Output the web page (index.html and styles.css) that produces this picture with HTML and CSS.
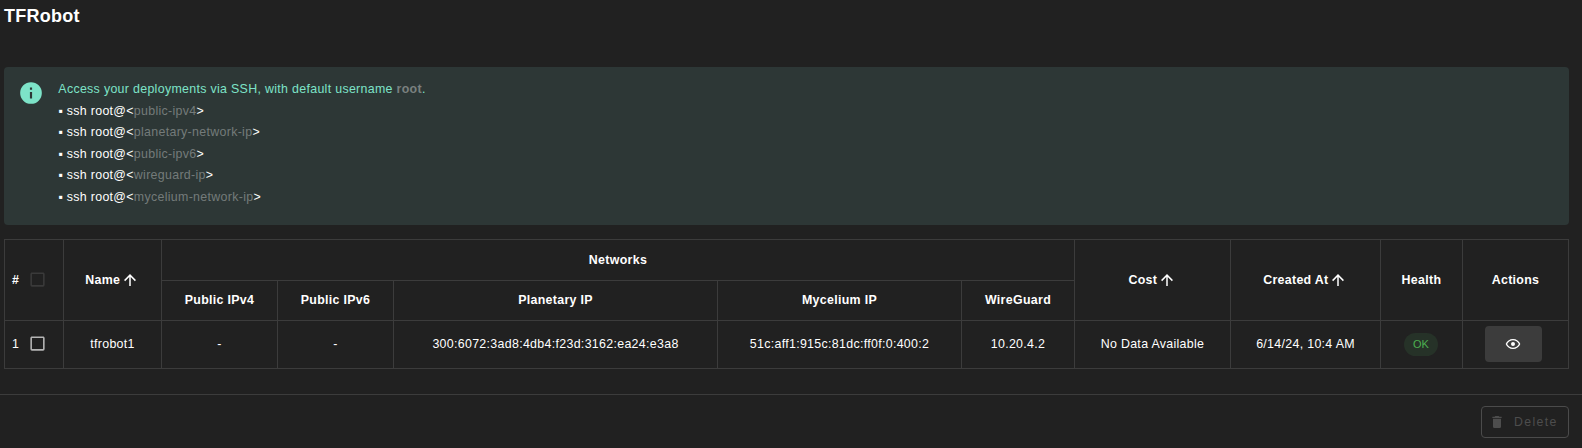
FILE: index.html
```html
<!DOCTYPE html>
<html lang="en">
<head>
<meta charset="utf-8">
<title>TFRobot</title>
<link rel="stylesheet" href="styles.css">
</head>
<body>
<svg class="defs" width="0" height="0">
  <symbol id="arrow-up" viewBox="0 0 24 24"><path d="M13,20H11V8L5.5,13.5L4.08,12.08L12,4.16L19.92,12.08L18.5,13.5L13,8V20Z"/></symbol>
  <symbol id="box" viewBox="0 0 24 24"><path d="M19,3H5C3.89,3 3,3.89 3,5V19A2,2 0 0,0 5,21H19A2,2 0 0,0 21,19V5C21,3.89 20.1,3 19,3M19,5V19H5V5H19Z"/></symbol>
</svg>
<h1 class="title">TFRobot</h1>
<section class="alert">
  <svg class="alert-icon" viewBox="0 0 24 24"><path d="M13,9H11V7H13M13,17H11V11H13M12,2A10,10 0 0,0 2,12A10,10 0 0,0 12,22A10,10 0 0,0 22,12A10,10 0 0,0 12,2Z"/></svg>
  <div class="alert-text">
    <p class="lead">Access your deployments via SSH, with default username <span class="user">root</span>.</p>
    <ul class="hosts">
      <li>ssh root@&lt;<span>public-ipv4</span>&gt;</li>
      <li>ssh root@&lt;<span>planetary-network-ip</span>&gt;</li>
      <li>ssh root@&lt;<span>public-ipv6</span>&gt;</li>
      <li>ssh root@&lt;<span>wireguard-ip</span>&gt;</li>
      <li>ssh root@&lt;<span>mycelium-network-ip</span>&gt;</li>
    </ul>
  </div>
</section>
<table class="table">
  <colgroup><col class="c-select"><col class="c-name"><col class="c-ipv4"><col class="c-ipv6"><col class="c-planetary"><col class="c-mycelium"><col class="c-wireguard"><col class="c-cost"><col class="c-created"><col class="c-health"><col class="c-actions"></colgroup>
  <thead>
    <tr class="row-group">
      <th class="tall" rowspan="2"><div class="select"># <svg class="box disabled"><use href="#box"/></svg></div></th>
      <th class="tall" rowspan="2"><div class="sort">Name<svg class="arrow"><use href="#arrow-up"/></svg></div></th>
      <th colspan="5">Networks</th>
      <th class="tall" rowspan="2"><div class="sort">Cost<svg class="arrow"><use href="#arrow-up"/></svg></div></th>
      <th class="tall" rowspan="2"><div class="sort">Created At<svg class="arrow"><use href="#arrow-up"/></svg></div></th>
      <th class="tall" rowspan="2">Health</th>
      <th class="tall" rowspan="2">Actions</th>
    </tr>
    <tr class="row-sub"><th>Public IPv4</th><th>Public IPv6</th><th>Planetary IP</th><th>Mycelium IP</th><th>WireGuard</th></tr>
  </thead>
  <tbody>
    <tr class="row-item">
      <td><div class="select">1 <svg class="box"><use href="#box"/></svg></div></td>
      <td>tfrobot1</td><td>-</td><td>-</td>
      <td>300:6072:3ad8:4db4:f23d:3162:ea24:e3a8</td>
      <td>51c:aff1:915c:81dc:ff0f:0:400:2</td>
      <td>10.20.4.2</td><td>No Data Available</td><td>6/14/24, 10:4 AM</td>
      <td class="flush"><div class="center"><span class="chip">OK</span></div></td>
      <td class="flush"><div class="center"><button class="view" aria-label="Details"><svg viewBox="0 0 24 24"><path d="M12,9A3,3 0 0,1 15,12A3,3 0 0,1 12,15A3,3 0 0,1 9,12A3,3 0 0,1 12,9M12,4.5C17,4.5 21.27,7.61 23,12C21.27,16.39 17,19.5 12,19.5C7,19.5 2.73,16.39 1,12C2.73,7.61 7,4.5 12,4.5M3.18,12C4.83,15.36 8.24,17.5 12,17.5C15.76,17.5 19.17,15.36 20.82,12C19.17,8.64 15.76,6.5 12,6.5C8.24,6.5 4.83,8.64 3.18,12Z"/></svg></button></div></td>
    </tr>
  </tbody>
</table>
<footer class="footer">
  <button class="delete" disabled><svg viewBox="0 0 24 24"><path d="M19,4H15.5L14.5,3H9.5L8.5,4H5V6H19M6,19A2,2 0 0,0 8,21H16A2,2 0 0,0 18,19V7H6V19Z"/></svg>Delete</button>
</footer>
</body>
</html>
```
FILE: styles.css
```css
* { box-sizing: border-box; margin: 0; padding: 0; }
html { background: #212121; overflow: hidden; }
body {
  height: 448px;
  background: #212121;
  color: #fff;
  font: 12.4px/21.6px "Liberation Sans", Arial, sans-serif;
  letter-spacing: 0.315px;
  overflow: hidden;
}
svg { display: block; fill: currentColor; flex: none; }
.defs { position: absolute; }
.title { height: 67px; padding-left: 4px; font-size: 18px; line-height: 32px; letter-spacing: 0.25px; }
.alert {
  display: flex;
  width: 1565px;
  height: 158px;
  margin-left: 4px;
  padding: 11px 14px;
  border-radius: 4px;
  background: #2d3736;
}
.alert-icon { width: 26px; height: 26px; margin: 2px 14.3px 0 0; color: #7de3c8; }
.alert-text { padding-top: 1px; }
.lead { color: #7de3c8; }
.user { color: #7a807f; font-weight: bold; }
.hosts { list-style: none; }
.hosts li::before { content: "▪ "; }
.hosts span { color: #747b7a; }
.table {
  width: 1565px;
  margin: 14px 0 0 4px;
  border-collapse: collapse;
  table-layout: fixed;
  text-align: center;
}
.table th, .table td { padding-top: 1px; border: 1px solid #3c3c3c; white-space: nowrap; vertical-align: middle; }
.table .tall { padding-top: 2px; }
.table .flush { padding: 0 0 1px; }
.row-group { height: 41px; }
.row-sub { height: 40px; }
.row-item { height: 48px; }
.c-select { width: 59px; }
.c-name { width: 98px; }
.c-ipv4, .c-ipv6 { width: 116px; }
.c-planetary { width: 324px; }
.c-mycelium { width: 244px; }
.c-wireguard { width: 113px; }
.c-cost { width: 156px; }
.c-created { width: 150px; }
.c-health { width: 82px; }
.c-actions { width: 106px; }
.select { display: flex; align-items: center; gap: 9px; padding-left: 7px; }
.box { width: 19px; height: 19px; margin: -1.5px 0 1.5px -0.3px; color: #b5b5b5; }
.disabled { color: #3a3a3a; }
.sort { display: flex; align-items: center; justify-content: center; }
.arrow { width: 18px; height: 18px; margin: -1px 1px 1px 0.4px; }
.center { display: flex; justify-content: center; }
.chip { height: 23px; margin-right: 1px; padding: 0 9px; border-radius: 12px; background: #263228; color: #4caf50; font-size: 11px; line-height: 23px; letter-spacing: 0.1px; }
.view { display: flex; align-items: center; justify-content: center; width: 57px; height: 36px; margin-right: 4px; padding-right: 1px; border: 0; border-radius: 4px; background: #3c3c3c; color: #fff; }
.view svg { width: 16px; height: 16px; }
.footer { display: flex; justify-content: flex-end; margin-top: 25px; padding: 11px 13px 0 0; border-top: 1px solid #3c3c3c; }
.delete {
  display: flex;
  align-items: center;
  gap: 9px;
  width: 88px;
  height: 32px;
  padding: 0 0 1px 7px;
  border: 1px solid #4b4b4b;
  border-radius: 4px;
  background: transparent;
  color: #4d4d4d;
  font: 12.3px "Liberation Sans", Arial, sans-serif;
  letter-spacing: 1.35px;
}
.delete svg { width: 16px; height: 16px; }
```
